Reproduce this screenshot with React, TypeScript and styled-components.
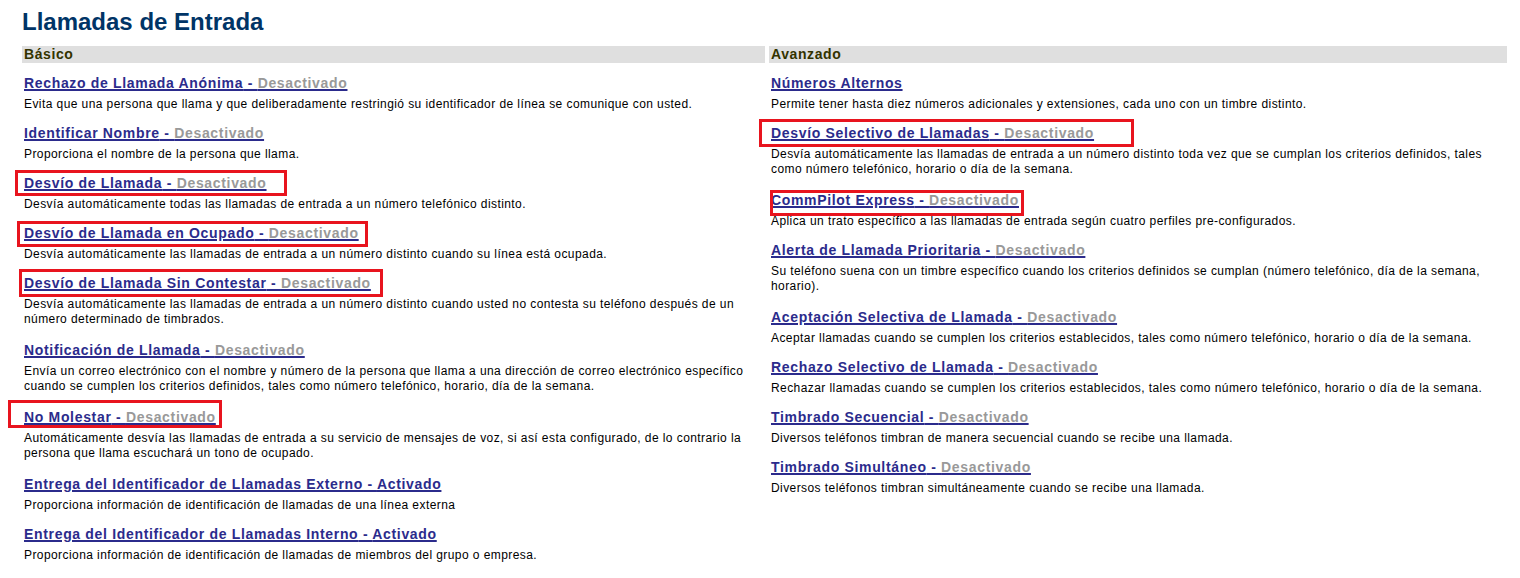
import React from "react";
import styled, { createGlobalStyle } from "styled-components";

type Feature = {
    name: string;
    status?: "Desactivado" | "Activado";
    text: string;
    wrapped?: boolean;
    mark?: { left: number; top: number; width: number; height: number };
};

const basico: Feature[] = [
    {
        name: "Rechazo de Llamada Anónima",
        status: "Desactivado",
        text: "Evita que una persona que llama y que deliberadamente restringió su identificador de línea se comunique con usted.",
    },
    {
        name: "Identificar Nombre",
        status: "Desactivado",
        text: "Proporciona el nombre de la persona que llama.",
    },
    {
        name: "Desvío de Llamada",
        status: "Desactivado",
        text: "Desvía automáticamente todas las llamadas de entrada a un número telefónico distinto.",
        mark: { left: -7, top: -5, width: 272, height: 26 },
    },
    {
        name: "Desvío de Llamada en Ocupado",
        status: "Desactivado",
        text: "Desvía automáticamente las llamadas de entrada a un número distinto cuando su línea está ocupada.",
        mark: { left: -5, top: -4, width: 351, height: 26 },
    },
    {
        name: "Desvío de Llamada Sin Contestar",
        status: "Desactivado",
        text: "Desvía automáticamente las llamadas de entrada a un número distinto cuando usted no contesta su teléfono después de un\nnúmero determinado de timbrados.",
        wrapped: true,
        mark: { left: -3, top: -6, width: 364, height: 28 },
    },
    {
        name: "Notificación de Llamada",
        status: "Desactivado",
        text: "Envía un correo electrónico con el nombre y número de la persona que llama a una dirección de correo electrónico específico\ncuando se cumplen los criterios definidos, tales como número telefónico, horario, día de la semana.",
        wrapped: true,
    },
    {
        name: "No Molestar",
        status: "Desactivado",
        text: "Automáticamente desvía las llamadas de entrada a su servicio de mensajes de voz, si así esta configurado, de lo contrario la\npersona que llama escuchará un tono de ocupado.",
        wrapped: true,
        mark: { left: -14, top: -9, width: 214, height: 28 },
    },
    {
        name: "Entrega del Identificador de Llamadas Externo",
        status: "Activado",
        text: "Proporciona información de identificación de llamadas de una línea externa",
    },
    {
        name: "Entrega del Identificador de Llamadas Interno",
        status: "Activado",
        text: "Proporciona información de identificación de llamadas de miembros del grupo o empresa.",
    },
];

const avanzado: Feature[] = [
    {
        name: "Números Alternos",
        text: "Permite tener hasta diez números adicionales y extensiones, cada uno con un timbre distinto.",
    },
    {
        name: "Desvío Selectivo de Llamadas",
        status: "Desactivado",
        text: "Desvía automáticamente las llamadas de entrada a un número distinto toda vez que se cumplan los criterios definidos, tales\ncomo número telefónico, horario o día de la semana.",
        wrapped: true,
        mark: { left: -10, top: -6, width: 375, height: 28 },
    },
    {
        name: "CommPilot Express",
        status: "Desactivado",
        text: "Aplica un trato específico a las llamadas de entrada según cuatro perfiles pre-configurados.",
        mark: { left: 1, top: -2, width: 254, height: 26 },
    },
    {
        name: "Alerta de Llamada Prioritaria",
        status: "Desactivado",
        text: "Su teléfono suena con un timbre específico cuando los criterios definidos se cumplan (número telefónico, día de la semana,\nhorario).",
        wrapped: true,
    },
    {
        name: "Aceptación Selectiva de Llamada",
        status: "Desactivado",
        text: "Aceptar llamadas cuando se cumplen los criterios establecidos, tales como número telefónico, horario o día de la semana.",
    },
    {
        name: "Rechazo Selectivo de Llamada",
        status: "Desactivado",
        text: "Rechazar llamadas cuando se cumplen los criterios establecidos, tales como número telefónico, horario o día de la semana.",
    },
    {
        name: "Timbrado Secuencial",
        status: "Desactivado",
        text: "Diversos teléfonos timbran de manera secuencial cuando se recibe una llamada.",
    },
    {
        name: "Timbrado Simultáneo",
        status: "Desactivado",
        text: "Diversos teléfonos timbran simultáneamente cuando se recibe una llamada.",
    },
];

const GlobalStyle = createGlobalStyle`
    body {
        margin: 0;
        background: #ffffff;
        font-family: "Liberation Sans", Arial, sans-serif;
    }
`;

const Page = styled.div`
    padding: 8px 13px 0 22px;
`;

const Title = styled.h1`
    margin: 0 0 10px 0;
    font-size: 24px;
    line-height: 28px;
    font-weight: bold;
    color: #003466;
`;

const Columns = styled.div`
    display: grid;
    grid-template-columns: 743px 738px;
    column-gap: 4px;
    align-items: start;
`;

const Section = styled.section`
    display: flex;
    flex-direction: column;
`;

const SectionHeader = styled.div`
    height: 17px;
    line-height: 17px;
    padding-left: 2px;
    margin-bottom: 12px;
    background: #dfdfdf;
    color: #333300;
    font-size: 14px;
    font-weight: bold;
    letter-spacing: 0.6px;
`;

const Item = styled.div<{ $wrapped?: boolean }>`
    position: relative;
    padding: 0 0 ${(p) => (p.$wrapped ? 15 : 13)}px 2px;
`;

const LinkRow = styled.div`
    font-size: 14px;
    line-height: 16px;
    font-weight: bold;
    letter-spacing: 0.67px;
`;

const FeatureLink = styled.a`
    color: #2b2b8c;
    text-decoration: underline;
    text-decoration-thickness: 2px;
    text-underline-offset: 1px;
    cursor: pointer;
`;

const Status = styled.span<{ $on: boolean }>`
    color: ${(p) => (p.$on ? "#2b2b8c" : "#999999")};
`;

const Description = styled.div`
    margin-top: 6px;
    font-size: 12px;
    line-height: 15px;
    letter-spacing: 0.42px;
    color: #000000;
    white-space: pre-line;
`;

const Mark = styled.div<{ $left: number; $top: number; $width: number; $height: number }>`
    position: absolute;
    left: ${(p) => p.$left}px;
    top: ${(p) => p.$top}px;
    width: ${(p) => p.$width}px;
    height: ${(p) => p.$height}px;
    box-sizing: border-box;
    border: 3px solid #e8141e;
    pointer-events: none;
`;

const FeatureItem: React.FC<{ feature: Feature }> = ({ feature }) => (
    <Item $wrapped={feature.wrapped}>
        <LinkRow>
            <FeatureLink href="#">
                {feature.name}
                {feature.status ? (
                    <>
                        {" - "}
                        <Status $on={feature.status === "Activado"}>{feature.status}</Status>
                    </>
                ) : null}
            </FeatureLink>
        </LinkRow>
        <Description>{feature.text}</Description>
        {feature.mark ? (
            <Mark
                $left={feature.mark.left}
                $top={feature.mark.top}
                $width={feature.mark.width}
                $height={feature.mark.height}
            />
        ) : null}
    </Item>
);

const App: React.FC = () => {
    return (
        <Page>
            <GlobalStyle />
            <Title>Llamadas de Entrada</Title>
            <Columns>
                <Section>
                    <SectionHeader>Básico</SectionHeader>
                    {basico.map((f, idx) => (
                        <FeatureItem key={idx} feature={f} />
                    ))}
                </Section>
                <Section>
                    <SectionHeader>Avanzado</SectionHeader>
                    {avanzado.map((f, idx) => (
                        <FeatureItem key={idx} feature={f} />
                    ))}
                </Section>
            </Columns>
        </Page>
    );
};

export default App;
